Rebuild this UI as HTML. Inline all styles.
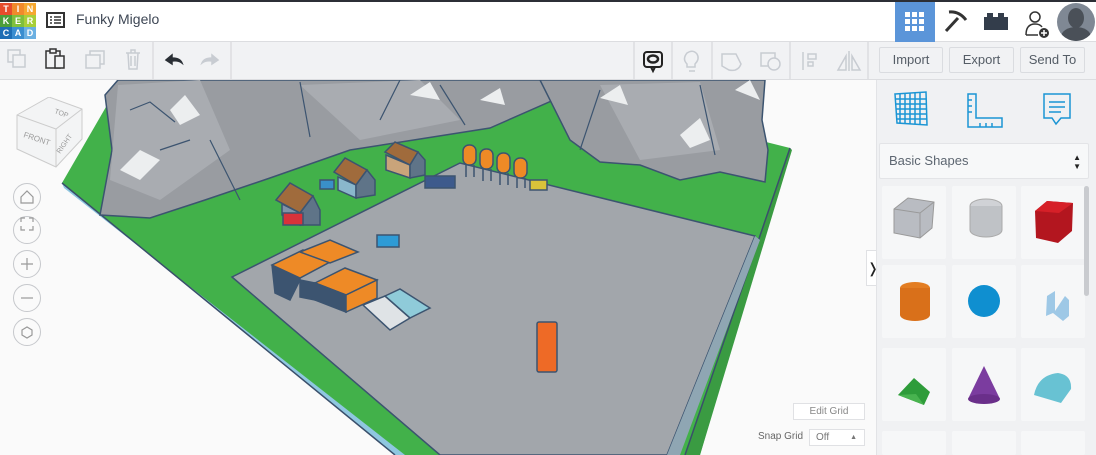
<!DOCTYPE html>
<html style="width:1096px;height:455px;overflow:hidden"><head><meta charset="utf-8"><style>
*{box-sizing:border-box;margin:0;padding:0}
body{width:1096px;height:455px;overflow:hidden;font-family:"Liberation Sans",sans-serif;background:#fafafa;position:relative}
.abs{position:absolute}
.top{left:0;top:0;width:1096px;height:42px;background:#fff;border-top:2px solid #2c2f36;border-bottom:1px solid #dcdde0}
.tb{left:0;top:42px;width:1096px;height:38px;background:#f1f2f4;border-bottom:1px solid #dcdde0}
.btn{top:47px;height:26px;border:1px solid #dadce0;background:#f1f2f4;color:#555d66;font-size:13px;text-align:center;line-height:24px;border-radius:2px}
.panel{left:876px;top:80px;width:220px;height:375px;background:#f0f1f3;border-left:1px solid #e2e3e6}
.tile{width:64px;height:73px;background:#f6f7f8;border-radius:2px}
.circ{left:13px;width:28px;height:28px;border:1px solid #c6c8cc;border-radius:50%;background:#fafafa}
</style></head><body>
<div class="abs top"></div>
<div class="abs" style="left:0;top:3px;width:36px;height:36px;display:grid;grid-template-columns:repeat(3,12px);font-size:9px;font-weight:bold;color:#fff;text-align:center;line-height:12px">
<div style="background:#e74c2c">T</div><div style="background:#f08a2c">I</div><div style="background:#f5a831">N</div>
<div style="background:#4c9e3a">K</div><div style="background:#7fbf3c">E</div><div style="background:#a8cf39">R</div>
<div style="background:#1e6eb5">C</div><div style="background:#3a8ed0">A</div><div style="background:#6bb0e2">D</div></div>
<svg class="abs" style="left:46px;top:12px" width="19" height="16"><rect x="1" y="1" width="17" height="14" fill="none" stroke="#333" stroke-width="2"/><path d="M4 5h2M8 5h7M4 8h2M8 8h7M4 11h2M8 11h7" stroke="#333" stroke-width="1.6"/></svg>
<div class="abs" style="left:76px;top:11px;font-size:14px;color:#3d4654">Funky Migelo</div>
<div class="abs" style="left:895px;top:2px;width:40px;height:40px;background:#5b95d9"></div>
<svg class="abs" style="left:905px;top:12px" width="20" height="20" fill="#fff"><rect x="0" y="0" width="5" height="5"/><rect x="7" y="0" width="5" height="5"/><rect x="14" y="0" width="5" height="5"/><rect x="0" y="7" width="5" height="5"/><rect x="7" y="7" width="5" height="5"/><rect x="14" y="7" width="5" height="5"/><rect x="0" y="14" width="5" height="5"/><rect x="7" y="14" width="5" height="5"/><rect x="14" y="14" width="5" height="5"/></svg>
<svg class="abs" style="left:943px;top:9px" width="26" height="26"><path d="M6 3Q16 2 23 11" stroke="#333" stroke-width="3" fill="none"/><path d="M15 9L3 22" stroke="#333" stroke-width="3"/></svg>
<svg class="abs" style="left:984px;top:13px" width="24" height="17"><rect x="0" y="4" width="24" height="13" fill="#333d4b"/><rect x="3" y="0" width="6" height="5" fill="#333d4b"/><rect x="14" y="0" width="6" height="5" fill="#333d4b"/></svg>
<svg class="abs" style="left:1024px;top:9px" width="28" height="30"><circle cx="11" cy="8" r="5" fill="none" stroke="#333" stroke-width="1.5"/><path d="M2 26Q2 15 11 15Q16 15 18 18" fill="none" stroke="#333" stroke-width="1.5"/><path d="M2 26h12" stroke="#333" stroke-width="1.5"/><circle cx="20" cy="24" r="5" fill="#333"/><path d="M20 21v6M17 24h6" stroke="#fff" stroke-width="1.5"/></svg>
<div class="abs" style="left:1057px;top:3px;width:38px;height:38px;border-radius:50%;background:#7f8894;overflow:hidden"><div style="position:absolute;left:11px;top:5px;width:16px;height:20px;border-radius:50%;background:#4a5058"></div><div style="position:absolute;left:4px;top:24px;width:30px;height:20px;border-radius:50%;background:#4a5058"></div></div>
<div class="abs tb"></div>
<svg class="abs" style="left:0;top:42px" width="880" height="38" fill="none" stroke-width="1.5">
<rect x="8" y="8" width="12" height="12" stroke="#c8ccd2"/><rect x="13" y="13" width="12" height="12" stroke="#c8ccd2" fill="#f1f2f4"/>
<rect x="46" y="9" width="14" height="17" stroke="#333"/><rect x="50" y="7" width="6" height="4" stroke="#333" fill="#f1f2f4"/><rect x="55" y="14" width="9" height="12" stroke="#333" fill="#f1f2f4"/>
<rect x="90" y="9" width="14" height="13" stroke="#c8ccd2"/><rect x="86" y="13" width="14" height="13" stroke="#c8ccd2" fill="#f1f2f4"/>
<path d="M126 11h14M131 11v-3h4v3M128 11l1 16h8l1-16M131 14v10M135 14v10" stroke="#c8ccd2"/>
<path d="M153 0v38" stroke="#dcdde0"/>
<path d="M166 18l6-5v3q8 0 10 5q-4-3-10-2v3z" fill="#2a2f35" stroke="#2a2f35"/>
<path d="M218 18l-6-5v3q-8 0-10 5q4-3 10-2v3z" fill="#c8ccd2" stroke="#c8ccd2"/>
<path d="M231 0v38" stroke="#dcdde0"/>
<path d="M634 0v38M672 0v38M712 0v38M790 0v38M868 0v38" stroke="#dcdde0"/>
<rect x="644" y="10" width="18" height="15" rx="3" stroke="#222" stroke-width="2"/><path d="M651 25l2 4 2-4" stroke="#222" stroke-width="2"/><ellipse cx="653" cy="17" rx="5" ry="3.5" stroke="#222" stroke-width="2.5"/>
<path d="M687 22q-5-5 0-11q6-4 10 1q3 5-2 10v3h-8z M689 29h6" stroke="#c8ccd2"/>
<path d="M722 12h14l5 10q-3 8-12 6l-7-4z" stroke="#c8ccd2"/>
<rect x="761" y="11" width="14" height="13" stroke="#c8ccd2"/><circle cx="774" cy="22" r="6" stroke="#c8ccd2" fill="#f1f2f4"/>
<path d="M803 10v18M808 12h8v5h-8zM808 20h5v4h-5z" stroke="#c8ccd2"/>
<path d="M849 9v20M846 28l-8 0 8-14zM852 28h8l-8-14z" stroke="#c8ccd2"/>
</svg>
<div class="abs btn" style="left:879px;width:64px">Import</div>
<div class="abs btn" style="left:949px;width:65px">Export</div>
<div class="abs btn" style="left:1020px;width:65px">Send To</div>
<svg class="abs" style="left:0;top:80px" width="866" height="375">
<g transform="translate(0,-80)">
<polygon points="62,183 395,455 700,455 790,148 560,90 110,100" fill="#42b14a"/>
<polygon points="62,183 395,455 405,455 64,188" fill="#8fc7e0"/>
<polygon points="790,148 685,455 700,455 792,150" fill="#3a9b42"/>
<path d="M62,183 L395,455 M790,148 L685,455" stroke="#3a4f6b" stroke-width="1.5" fill="none"/>
<polygon points="232,277 460,163 755,236 667,455 440,455" fill="#a2a6ab" stroke="#3c5470" stroke-width="1.5"/>
<polygon points="755,236 667,455 680,455 760,240" fill="#8fa6b3"/>
<polygon points="100,215 112,150 105,95 118,80 540,80 565,95 490,128 350,150 270,178 205,200 150,218" fill="#999ca1" stroke="#3c5470" stroke-width="1.5"/>
<polygon points="540,80 765,80 762,120 768,150 765,182 720,172 680,180 640,165 600,162 570,140" fill="#999ca1" stroke="#3c5470" stroke-width="1.5"/>
<polygon points="118,85 200,80 230,150 160,200 110,180" fill="#a9acb1"/>
<polygon points="300,85 420,80 460,120 360,140" fill="#a9acb1"/>
<polygon points="600,85 700,82 720,150 640,160" fill="#a9acb1"/>
<path d="M130,110l20-8 25 20M300,82l10 55M400,80l-20 40M440,85l25 40M600,90l-20 60M700,85l15 70M210,140l30 60M160,150l30-10" stroke="#3c5470" stroke-width="1.2" fill="none"/>
<polygon points="120,170 140,150 160,160 140,180" fill="#eceeef"/>
<polygon points="170,110 185,95 200,115 180,125" fill="#eceeef"/>
<polygon points="410,95 430,82 440,100" fill="#eceeef"/>
<polygon points="600,98 620,85 628,105" fill="#eceeef"/>
<polygon points="680,135 700,118 710,140 690,148" fill="#eceeef"/>
<polygon points="735,90 750,80 760,100" fill="#eceeef"/>
<polygon points="480,100 500,88 505,105" fill="#eceeef"/>
<g stroke="#3c5470" stroke-width="1.5">
<polygon points="276,200 290,183 313,196 300,213" fill="#a06b3c"/><polygon points="282,204 300,213 300,225 282,215" fill="#8193a8"/><polygon points="300,213 313,196 320,210 320,225 300,225" fill="#5f7488"/>
<polygon points="334,172 345,158 367,170 356,185" fill="#a06b3c"/><polygon points="338,177 356,185 356,198 338,190" fill="#8ab7cc"/><polygon points="356,185 367,170 375,180 375,195 356,198" fill="#5f7488"/>
<rect x="320" y="180" width="14" height="9" fill="#3a90c8"/>
<polygon points="385,152 395,142 418,152 410,165" fill="#a06b3c"/><polygon points="386,155 410,165 410,178 386,170" fill="#c9a47a"/><polygon points="410,165 418,152 425,160 425,175 410,178" fill="#5f7488"/>
<rect x="283" y="213" width="20" height="12" fill="#d8323a"/>
<rect x="463" y="145" width="13" height="20" rx="6" fill="#ee8a26"/><rect x="480" y="149" width="13" height="20" rx="6" fill="#ee8a26"/><rect x="497" y="153" width="13" height="20" rx="6" fill="#ee8a26"/><rect x="514" y="158" width="13" height="20" rx="6" fill="#ee8a26"/>
<path d="M466 165v12M474 165v12M483 169v12M491 169v12M500 173v12M508 173v12M517 178v10M525 178v10" />
<rect x="425" y="176" width="30" height="12" fill="#3d5a8c"/><rect x="530" y="180" width="17" height="10" fill="#d9c23a"/>
<rect x="377" y="235" width="22" height="12" fill="#2e9bd6"/>
<polygon points="272,265 300,252 300,280 290,300 275,293" fill="#3c5470"/>
<polygon points="272,265 303,250 330,262 300,278" fill="#ee8a26"/>
<polygon points="300,252 330,240 358,252 330,263" fill="#ee8a26"/>
<polygon points="315,283 345,268 377,280 346,295" fill="#ee8a26"/>
<polygon points="315,283 346,295 346,312 315,300" fill="#3c5470"/>
<polygon points="346,295 377,280 377,298 346,312" fill="#ee8a26"/>
<polygon points="300,280 315,283 315,300 300,297" fill="#3c5470"/>
<polygon points="363,305 385,296 410,318 390,330" fill="#dfe3e6"/>
<polygon points="385,296 400,289 430,308 410,318" fill="#8fcbd9"/>
<rect x="537" y="322" width="20" height="50" fill="#ee6a26" rx="2"/>
</g>
</g>
</svg>
<svg class="abs" style="left:14px;top:97px" width="70" height="72">
<polygon points="3,18 35,0 68,12 68,42 42,70 3,52" fill="#f3f4f5" stroke="#ccc"/>
<path d="M3,18 42,32 68,12 M42,32V70" stroke="#ccc" fill="none"/>
<text x="40" y="16" font-size="7" fill="#999" transform="rotate(20 40 16)">TOP</text>
<text x="9" y="40" font-size="8" fill="#999" transform="rotate(18 9 40)">FRONT</text>
<text x="46" y="57" font-size="7" fill="#999" transform="rotate(-55 46 57)">RIGHT</text>
</svg>
<div class="abs circ" style="top:183px"></div><div class="abs circ" style="top:216px"></div><div class="abs circ" style="top:250px"></div><div class="abs circ" style="top:284px"></div><div class="abs circ" style="top:318px"></div>
<svg class="abs" style="left:13px;top:183px" width="28" height="170" fill="none" stroke="#999" stroke-width="1.2">
<path d="M8 14l6-6 6 6v6h-12z"/><path d="M8 39h0v-4h4M20 39v-4h-4M8 43v4h4M20 43v4h-4"/>
<path d="M14 75v12M8 81h12"/><path d="M8 115h12"/><path d="M9 147l5-3 5 3v5l-5 3-5-3z"/>
</svg>
<div class="abs" style="left:793px;top:403px;width:72px;height:17px;background:#fff;border:1px solid #e0e1e4;font-size:10px;color:#888;text-align:center;line-height:15px">Edit Grid</div>
<div class="abs" style="left:758px;top:431px;font-size:10px;color:#666">Snap Grid</div>
<div class="abs" style="left:809px;top:429px;width:56px;height:17px;background:#fff;border:1px solid #e0e1e4;font-size:10px;color:#777;padding-left:6px;line-height:16px">Off<span style="position:absolute;right:7px;font-size:7px">▲</span></div>
<div class="abs" style="left:866px;top:250px;width:14px;height:36px;background:#fff;border:1px solid #e0e1e4;font-size:14px;line-height:34px;text-align:center;color:#222">❭</div>
<div class="abs panel"></div>
<svg class="abs" style="left:890px;top:90px" width="190" height="40" fill="none" stroke="#1b95d4" stroke-width="1.5">
<polygon points="5,4 36,2 37,35 7,33"/><path d="M10 4v29M15 4v29M20 3v31M25 3v31M30 3v31M6 9h30M6 14h30M6 19h30M6 24h30M6 29h31"/>
<path d="M78 4h8v24h26v9h-34z"/><path d="M78 10h4M78 16h4M78 22h4M90 37v-4M96 37v-4M102 37v-4"/>
<path d="M154 4h26v24h-9l-5 6-4-6h-8z"/><path d="M159 12h16M159 17h16M159 22h12"/>
</svg>
<div class="abs" style="left:879px;top:143px;width:210px;height:36px;background:#f7f8f9;border:1px solid #e3e4e7;border-radius:2px;font-size:13px;color:#5d6671;padding-left:9px;line-height:34px">Basic Shapes<span style="position:absolute;right:7px;top:0;font-size:8px;line-height:9px;padding-top:9px;color:#222">▲<br>▼</span></div>
<div class="abs tile" style="left:882px;top:186px"></div><div class="abs tile" style="left:952px;top:186px"></div><div class="abs tile" style="left:1021px;top:186px"></div>
<div class="abs tile" style="left:882px;top:265px"></div><div class="abs tile" style="left:952px;top:265px"></div><div class="abs tile" style="left:1021px;top:265px"></div>
<div class="abs tile" style="left:882px;top:348px"></div><div class="abs tile" style="left:952px;top:348px"></div><div class="abs tile" style="left:1021px;top:348px"></div>
<div class="abs tile" style="left:882px;top:431px;height:24px"></div><div class="abs tile" style="left:952px;top:431px;height:24px"></div><div class="abs tile" style="left:1021px;top:431px;height:24px"></div>
<div class="abs" style="left:1084px;top:186px;width:5px;height:110px;background:#c9cbcf;border-radius:3px"></div>
<svg class="abs" style="left:882px;top:186px" width="205" height="240">
<polygon points="12,23 26,12 52,16 50,42 38,52 12,47" fill="#b9bcc2" stroke="#999"/>
<path d="M12,23 38,27 52,16 M38,27V52" stroke="#999" fill="none"/>
<ellipse cx="104" cy="20" rx="16" ry="7" fill="#d0d2d6" stroke="#aaa"/><path d="M88 20v24a16 7 0 0 0 32 0V20" fill="#bfc2c6" stroke="#aaa"/>
<polygon points="153,25 165,15 191,17 190,45 176,57 154,52" fill="#b3161f"/><polygon points="153,25 177,27 191,17 165,15" fill="#d62028"/>
<ellipse cx="33" cy="102" rx="15" ry="6" fill="#e37d22"/><path d="M18 102v27a15 6 0 0 0 30 0V102" fill="#d9701a"/>
<circle cx="102" cy="115" r="16" fill="#0f8fd0"/>
<path d="M165 110l8-5v20l10-15 4 4v16l-6 5-10-8-7 3z" fill="#9ec8e6"/>
<polygon points="16,209 32,192 48,206 42,219" fill="#2e9c3a"/><polygon points="16,209 42,219 34,208" fill="#48b34f"/>
<polygon points="86,213 102,180 118,213" fill="#7b3c9f"/><ellipse cx="102" cy="213" rx="16" ry="5" fill="#6a2f8a"/>
<path d="M152 209q4-20 24-22q14 2 13 16l-10 14z" fill="#68c2d3"/>
</svg>
</body></html>
